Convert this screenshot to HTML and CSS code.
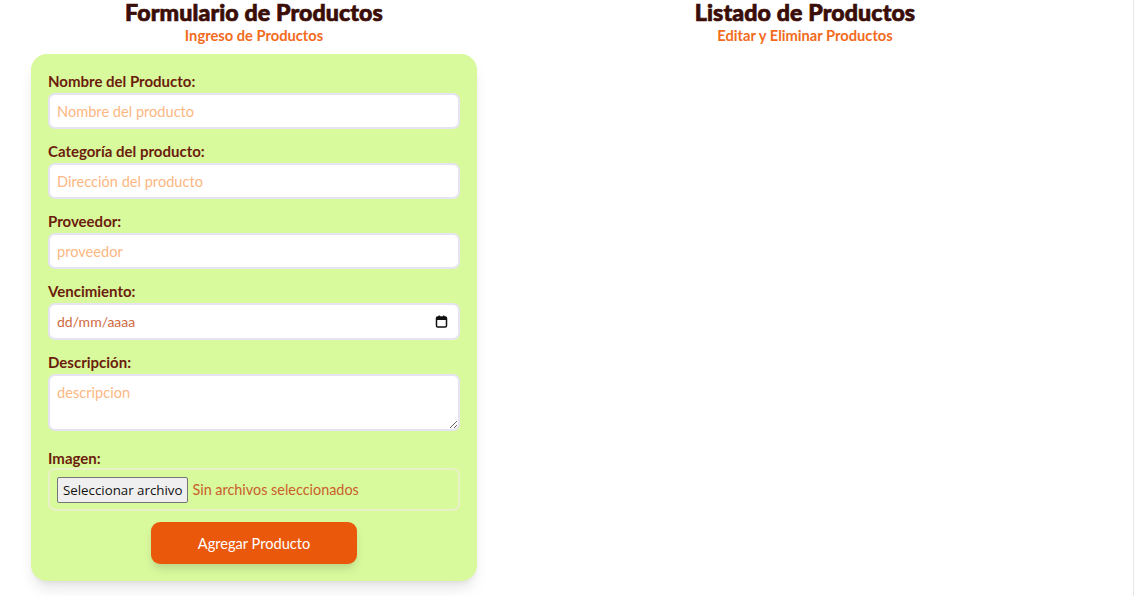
FILE: index.html
```html
<!DOCTYPE html>
<html lang="es">
<head>
<meta charset="utf-8">
<title>Productos</title>
<link rel="stylesheet" href="styles.css">
</head>
<body>
<main class="page">
  <section class="col col-form">
    <h1 class="title">Formulario de Productos</h1>
    <p class="subtitle">Ingreso de Productos</p>
    <form class="card">
      <label class="label">Nombre del Producto:</label>
      <input class="field" type="text" placeholder="Nombre del producto">
      <label class="label">Categoría del producto:</label>
      <input class="field" type="text" placeholder="Dirección del producto">
      <label class="label">Proveedor:</label>
      <input class="field" type="text" placeholder="proveedor">
      <label class="label">Vencimiento:</label>
      <div class="field date-field">
        <span>dd/mm/aaaa</span>
        <svg class="cal" width="13" height="13" viewBox="0 0 13 13"><rect x="1.5" y="2" width="10" height="10" rx="1.3" fill="none" stroke="#111" stroke-width="1.5"/><rect x="1.5" y="2" width="10" height="3" fill="#111"/><rect x="3.5" y="0.5" width="1.4" height="2.5" fill="#111"/><rect x="8.1" y="0.5" width="1.4" height="2.5" fill="#111"/></svg>
      </div>
      <label class="label">Descripción:</label>
      <textarea class="field area" placeholder="descripcion"></textarea>
      <label class="label label-img">Imagen:</label>
      <div class="file-box">
        <span class="file-btn">Seleccionar archivo</span>
        <span class="file-none">Sin archivos seleccionados</span>
      </div>
      <div class="actions">
        <button type="button" class="submit">Agregar Producto</button>
      </div>
    </form>
  </section>
  <section class="col col-list">
    <h1 class="title">Listado de Productos</h1>
    <p class="subtitle">Editar y Eliminar Productos</p>
  </section>
</main>
</body>
</html>
```
FILE: styles.css
```css
* { box-sizing: border-box; }
html, body { margin: 0; padding: 0; background: #fff; }
body {
  font-family: "Lato", "Open Sans", sans-serif;
  border-right: 1px solid #e6e6e6;
  min-height: 596px;
}
.page {
  display: flex;
  align-items: flex-start;
}
.col {
  display: flex;
  flex-direction: column;
  align-items: center;
}
.col-form { width: 508px; }
.col-list { width: 594px; }
.title {
  margin: 0;
  font-size: 23.2px;
  line-height: 25px;
  font-weight: 900;
  color: #3a0d07;
  -webkit-text-stroke: 0.7px #3a0d07;
  letter-spacing: 0.1px;
}
.subtitle {
  margin: 1px 0 0;
  font-size: 14.7px;
  line-height: 18px;
  font-weight: 700;
  color: #f26b1d;
}
.card {
  margin-top: 10px;
  width: 446px;
  background: #d9f99d;
  border-radius: 16px;
  padding: 17px 17px 17px;
  box-shadow: 0 10px 15px -3px rgba(0,0,0,0.1), 0 4px 6px -4px rgba(0,0,0,0.1);
  display: flex;
  flex-direction: column;
}
.label {
  display: block;
  font-size: 15px;
  line-height: 20px;
  font-weight: 700;
  color: #6b1d0c;
  margin-bottom: 2px;
}
.field {
  display: block;
  width: 100%;
  height: 36px;
  border: 2px solid #e6e4f2;
  border-radius: 7px;
  background: #fff;
  padding: 0 7px;
  font-family: inherit;
  font-size: 14.6px;
  color: #c8502a;
  margin-bottom: 12px;
  outline: none;
}
.field::placeholder { color: #fdb783; }
.date-field {
  height: 37px;
  display: flex;
  align-items: center;
  justify-content: space-between;
  padding-right: 10px;
  color: #cf6a42;
  font-size: 14px;
}
.area {
  height: 57px;
  padding-top: 8px;
  resize: vertical;
  margin-bottom: 17px;
}
.label-img { margin-bottom: 0; }
.file-box {
  height: 43px;
  border: 2px solid #e8f0c8;
  border-radius: 7px;
  display: flex;
  align-items: center;
  padding: 0 7px;
  gap: 4px;
}
.file-btn {
  font-family: "Open Sans", sans-serif;
  font-size: 13.3px;
  color: #111;
  background: #efefef;
  border: 1px solid #767676;
  border-radius: 2px;
  padding: 1px 5px;
  line-height: 22px;
  height: 26px;
}
.file-none {
  font-size: 14.4px;
  color: #c8602a;
}
.actions {
  display: flex;
  justify-content: center;
  margin-top: 11px;
}
.submit {
  width: 206px;
  height: 42px;
  border: none;
  border-radius: 9px;
  background: #ea580c;
  color: #fff;
  font-family: inherit;
  font-size: 14.6px;
  box-shadow: 0 6px 10px -2px rgba(0,0,0,0.15);
}
```
